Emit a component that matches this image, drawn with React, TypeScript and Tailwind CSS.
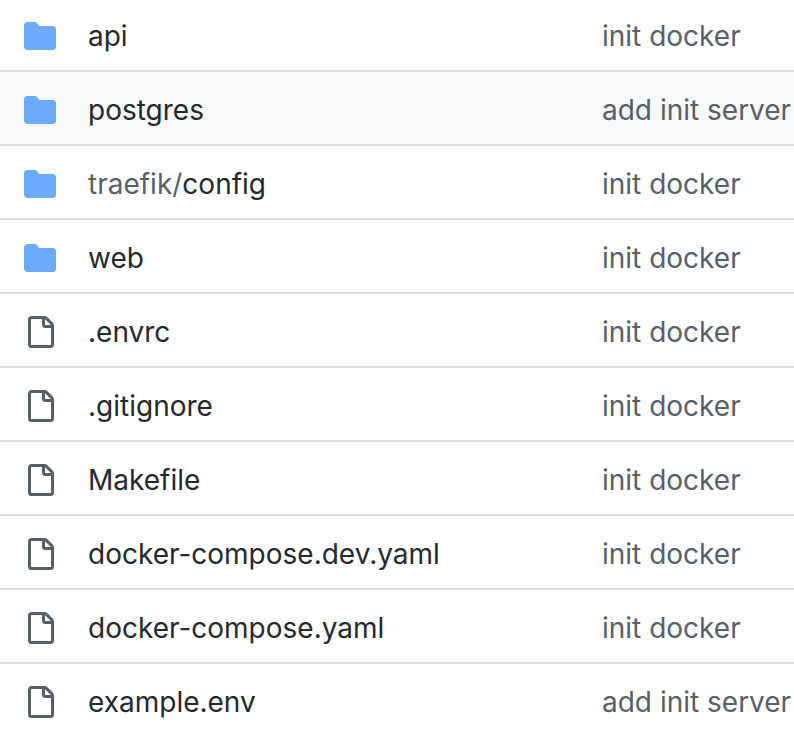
type Entry = { name: string; parent?: string; kind: "dir" | "file"; message: string };

const entries: Entry[] = [
  { name: "api", kind: "dir", message: "init docker" },
  { name: "postgres", kind: "dir", message: "add init server" },
  { name: "config", parent: "traefik/", kind: "dir", message: "init docker" },
  { name: "web", kind: "dir", message: "init docker" },
  { name: ".envrc", kind: "file", message: "init docker" },
  { name: ".gitignore", kind: "file", message: "init docker" },
  { name: "Makefile", kind: "file", message: "init docker" },
  { name: "docker-compose.dev.yaml", kind: "file", message: "init docker" },
  { name: "docker-compose.yaml", kind: "file", message: "init docker" },
  { name: "example.env", kind: "file", message: "add init server" },
];

function FolderIcon() {
  return (
    <svg viewBox="0 0 16 16" className="size-8 fill-[#6cabf9]" role="img" aria-label="Directory">
      <path d="M1.75 1A1.75 1.75 0 000 2.75v10.5C0 14.216.784 15 1.75 15h12.5A1.75 1.75 0 0016 13.25v-8.5A1.75 1.75 0 0014.25 3h-6.5a.25.25 0 01-.2-.1l-.9-1.2c-.33-.44-.85-.7-1.4-.7h-3.5z" />
    </svg>
  );
}

function FileIcon() {
  return (
    <svg viewBox="0 0 16 16" className="size-8 fill-[#57606a]" role="img" aria-label="File">
      <path
        fillRule="evenodd"
        d="M3.75 1.5a.25.25 0 00-.25.25v12.5c0 .138.112.25.25.25h9.5a.25.25 0 00.25-.25V6h-2.75A1.75 1.75 0 019 4.25V1.5H3.75zm6.75.062V4.25c0 .138.112.25.25.25h2.688a.252.252 0 00-.011-.013l-2.914-2.914a.272.272 0 00-.013-.011zM2 1.75C2 .784 2.784 0 3.75 0h6.586c.464 0 .909.184 1.237.513l2.914 2.914c.329.328.513.773.513 1.237v9.586A1.75 1.75 0 0113.25 16h-9.5A1.75 1.75 0 012 14.25V1.75z"
      />
    </svg>
  );
}

export default function App() {
  return (
    <main className="overflow-hidden bg-white font-[Inter,sans-serif] text-[28px] leading-9 text-[#24292f]">
      <table className="w-full table-fixed border-collapse">
        <tbody>
          {entries.map((entry) => (
            <tr
              key={entry.name}
              className={`h-[74px] border-t-2 border-[#d8dee4] first:h-[71px] first:border-t-0 [&>td]:pt-1 first:[&>td]:pt-0.5 last:[&>td]:pt-0.5 ${entry.name === "postgres" ? "bg-[#f6f8fa]" : ""}`}
            >
              <td className="w-[88px] pl-6">{entry.kind === "dir" ? <FolderIcon /> : <FileIcon />}</td>
              <td className="whitespace-nowrap p-0">
                <a href="#">
                  {entry.parent && <span className="text-[#57606a]">{entry.parent}</span>}
                  {entry.name}
                </a>
              </td>
              <td className="w-48 whitespace-nowrap p-0 text-[#57606a]">
                <a href="#">{entry.message}</a>
              </td>
            </tr>
          ))}
        </tbody>
      </table>
    </main>
  );
}
